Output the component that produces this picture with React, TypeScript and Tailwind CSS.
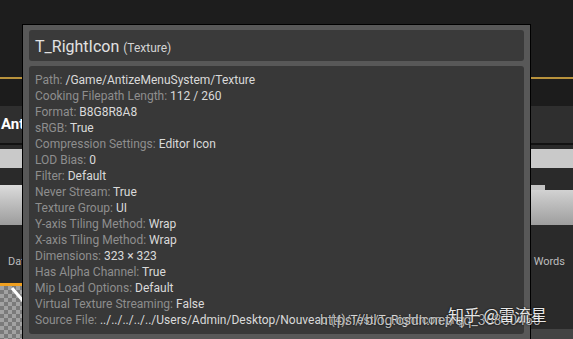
import React from 'react';

// Asset tooltip over a content browser, Unreal Editor style

const rows: [string, string][] = [
  ['Path', '/Game/AntizeMenuSystem/Texture'],
  ['Cooking Filepath Length', '112 / 260'],
  ['Format', 'B8G8R8A8'],
  ['sRGB', 'True'],
  ['Compression Settings', 'Editor Icon'],
  ['LOD Bias', '0'],
  ['Filter', 'Default'],
  ['Never Stream', 'True'],
  ['Texture Group', 'UI'],
  ['Y-axis Tiling Method', 'Wrap'],
  ['X-axis Tiling Method', 'Wrap'],
  ['Dimensions', '323 × 323'],
  ['Has Alpha Channel', 'True'],
  ['Mip Load Options', 'Default'],
  ['Virtual Texture Streaming', 'False'],
  ['Source File', '../../../../../Users/Admin/Desktop/Nouveau (4)/Test/T_RightIcon.png'],
];

function Background() {
  return (
    <div className="flex h-full flex-col">
      <div className="h-[77px] bg-[#1d1d1d]" />
      <div className="h-[2px] bg-[#b8923c]" />
      <div className="h-[27px] bg-[#1c1c1c]" />
      <div className="flex h-[37px] items-center bg-[#2f2f2f] text-[15px] font-bold text-white">
        <span className="pl-[1px]">Antize</span>
      </div>
      <div className="h-[2px] bg-[#121212]" />
      <div className="h-[4px] bg-[#2a2a2a]" />
      <div className="h-[19px] bg-[#c9c9c9]" />
      <div className="h-[17px] bg-[#2a2a2a]" />
      <div className="flex h-[40px] justify-between bg-[#2a2a2a]">
        <div className="w-[30px] bg-gradient-to-b from-[#dcdcdc] to-[#9c9c9c]" />
        <div className="flex w-[42px] flex-col">
          <div className="h-[5px] w-[14px] bg-[#c4c4c4]" />
          <div className="flex-1 bg-gradient-to-b from-[#d2d2d2] to-[#9e9e9e]" />
        </div>
      </div>
      <div className="flex h-[58px] items-end justify-between bg-[#2a2a2a] pb-[13px] text-[11px] text-[#bdbdbd]">
        <span className="pl-[8px]">Data</span>
        <span className="pr-[8px]">Words</span>
      </div>
      <div className="flex flex-1 justify-between bg-[#2a2a2a]">
        <div className="flex w-[30px] flex-col">
          <div className="h-[3px] bg-[#f0a020]" />
          <div className="relative flex-1 bg-[repeating-conic-gradient(#7a7a7a_0%_25%,#a2a2a2_0%_50%)] bg-[length:8px_8px]">
            <svg className="absolute left-0 top-0" width="30" height="60">
              <line x1="12" y1="2" x2="24" y2="16" stroke="#ffffff" strokeWidth="3" />
            </svg>
          </div>
        </div>
        <div className="flex w-[42px] flex-col justify-end">
          <div className="h-[10px] bg-[#444444]" />
        </div>
      </div>
    </div>
  );
}

function Tooltip() {
  return (
    <div className="absolute left-[22px] top-[24px] w-[509px] border border-black bg-[#585858] pb-[6px] pl-[6px] pr-[6px] pt-[5px]">
      <div className="flex h-[31px] items-baseline gap-[4px] rounded-[3px] bg-[#3a3a3a] px-[6px] pt-[5px]">
        <span className="text-[16px] text-[#e2e2e2]">T_RightIcon</span>
        <span className="text-[12px] text-[#d4d4d4]">(Texture)</span>
      </div>
      <div className="mt-[5px] overflow-hidden rounded-[3px] bg-[#383838] px-[6px] py-[6px] text-[12px] leading-[16px]">
        {rows.map(([label, value]) => (
          <div key={label} className="whitespace-nowrap">
            <span className="text-[#8e8e8e]">{label}: </span>
            <span className="text-[#dadada]">{value}</span>
          </div>
        ))}
      </div>
    </div>
  );
}

export default function App() {
  return (
    <div className="relative h-[339px] w-[573px] overflow-hidden bg-[#1d1d1d] font-['Roboto',sans-serif]">
      <Background />
      <Tooltip />
      {/* watermarks */}
      <div className="absolute left-[320px] top-[310px] whitespace-nowrap text-[14px] text-white/70 [text-shadow:0_0_2px_#000]">
        https://blog.csdn.net/qq_36850456
      </div>
      <div className="absolute left-[448px] top-[302px] whitespace-nowrap font-['Noto_Sans_CJK_SC',sans-serif] text-[16px] text-white/90 [text-shadow:0_0_2px_#000]">
        知乎 @雷流星
      </div>
    </div>
  );
}
